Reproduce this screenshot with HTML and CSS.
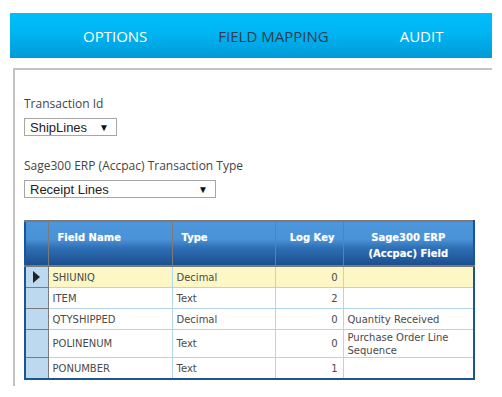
FILE: index.html
```html
<!DOCTYPE html>
<html>
<head>
<meta charset="utf-8">
<link rel="stylesheet" href="styles.css">
</head>
<body>
<nav class="tabs">
  <span class="tab">OPTIONS</span>
  <span class="tab active">FIELD MAPPING</span>
  <span class="tab">AUDIT</span>
</nav>
<section class="panel">
  <div class="field">
    <label class="lbl">Transaction Id</label>
    <div class="select sel-short"><span>ShipLines</span><span class="arrow">▼</span></div>
  </div>
  <div class="field">
    <label class="lbl">Sage300 ERP (Accpac) Transaction Type</label>
    <div class="select sel-long"><span>Receipt Lines</span><span class="arrow">▼</span></div>
  </div>
  <table class="grid">
    <colgroup>
      <col class="c0"><col class="c1"><col class="c2"><col class="c3"><col class="c4">
    </colgroup>
    <thead>
      <tr>
        <th class="rh"></th>
        <th class="left">Field Name</th>
        <th class="left">Type</th>
        <th class="right">Log Key</th>
        <th class="center">Sage300 ERP<br>(Accpac) Field</th>
      </tr>
    </thead>
    <tbody>
      <tr class="sel">
        <td class="rh"><span class="tri"></span></td>
        <td>SHIUNIQ</td><td>Decimal</td><td class="num">0</td><td></td>
      </tr>
      <tr>
        <td class="rh"></td>
        <td>ITEM</td><td>Text</td><td class="num">2</td><td></td>
      </tr>
      <tr>
        <td class="rh"></td>
        <td>QTYSHIPPED</td><td>Decimal</td><td class="num">0</td><td>Quantity Received</td>
      </tr>
      <tr class="tall">
        <td class="rh"></td>
        <td>POLINENUM</td><td>Text</td><td class="num">0</td><td class="wrap">Purchase Order Line Sequence</td>
      </tr>
      <tr>
        <td class="rh"></td>
        <td>PONUMBER</td><td>Text</td><td class="num">1</td><td></td>
      </tr>
    </tbody>
  </table>
</section>
</body>
</html>
```

FILE: styles.css
```css
html, body {
  margin: 0;
  padding: 0;
  background: #fff;
}
body {
  width: 502px;
  height: 397px;
  overflow: hidden;
  font-family: "Open Sans", "DejaVu Sans", sans-serif;
}
.tabs {
  margin: 13px 10px 0 10px;
  height: 45px;
  box-sizing: border-box;
  border-top: 1px solid #1fb0ee;
  background: linear-gradient(#00bdfb 0%, #00b4f2 45%, #009ad9 100%);
  display: flex;
  align-items: center;
  padding-left: 73px;
  gap: 71px;
}
.tab {
  color: #fff;
  font-size: 15px;
  line-height: 1;
  padding-top: 1px;
}
.tab.active {
  color: #2c3e50;
}
.panel {
  margin: 10px 10px 0 13px;
  height: 318px;
  box-sizing: border-box;
  border-top: 2px solid #c3c3c3;
  border-left: 2px solid #c3c3c3;
  padding: 26px 0 0 9px;
}
.field {
  display: flex;
  flex-direction: column;
  align-items: flex-start;
  margin-bottom: 22px;
}
.lbl {
  font-size: 12px;
  color: #444;
  line-height: 16px;
  margin-bottom: 6px;
}
.select {
  box-sizing: border-box;
  height: 18px;
  border: 1px solid #a6a6a6;
  display: flex;
  align-items: center;
  justify-content: space-between;
  padding: 0 7px 0 5px;
  font-family: "Liberation Sans", Arial, sans-serif;
  font-size: 13px;
  color: #222;
}
.sel-short { width: 93px; }
.sel-long { width: 192px; }
.arrow {
  font-size: 10px;
  color: #111;
}
.grid {
  margin-top: 12px;
  border-collapse: collapse;
  table-layout: fixed;
  width: 449px;
  font-family: "DejaVu Sans", Verdana, sans-serif;
  font-size: 10px;
  border: 2px solid #1a5596;
  border-top: 2px solid #7a7a7a;
}
.c0 { width: 23px; }
.c1 { width: 124px; }
.c2 { width: 103px; }
.c3 { width: 68px; }
.c4 { width: 131px; }
.grid th {
  height: 35px;
  background: linear-gradient(#4d96db 0%, #4a92d6 40%, #2f6fb5 60%, #1b4f8e 100%);
  color: #fff;
  font-weight: bold;
  vertical-align: top;
  padding: 8px 8px 0 9px;
  border-left: 1px solid #7a7a7a;
  border-bottom: 2px solid #7a7a7a;
  line-height: 16px;
  text-shadow: 0 0 1px rgba(255,255,255,0.4);
}
.grid th.rh { border-left: none; padding: 0; }
.grid th.left { text-align: left; }
.grid th.right { text-align: right; padding-right: 8px; }
.grid th.center { text-align: center; padding: 8px 4px 0 4px; }
.grid td {
  height: 20px;
  padding: 0 4px;
  color: #4a4a4a;
  border-left: 1px solid #b4d4ee;
  border-bottom: 1px solid #b4d4ee;
  white-space: nowrap;
  vertical-align: middle;
  line-height: 13px;
}
.grid td.rh {
  background: #bcd9ef;
  border-left: none;
  border-right: 1px solid #7a7a7a;
  border-bottom: 1px solid #7a7a7a;
  padding: 0;
}
.grid td.num { text-align: right; padding-right: 5px; }
.grid td.wrap { white-space: normal; }
.grid tr.tall td { height: 27px; }
.grid tr.sel td { background: #fdf7c6; }
.grid tr.sel td.rh { background: #bcd9ef; }
.tri {
  display: block;
  width: 0;
  height: 0;
  margin-left: 7px;
  border-top: 6px solid transparent;
  border-bottom: 6px solid transparent;
  border-left: 7px solid #222;
}
```
